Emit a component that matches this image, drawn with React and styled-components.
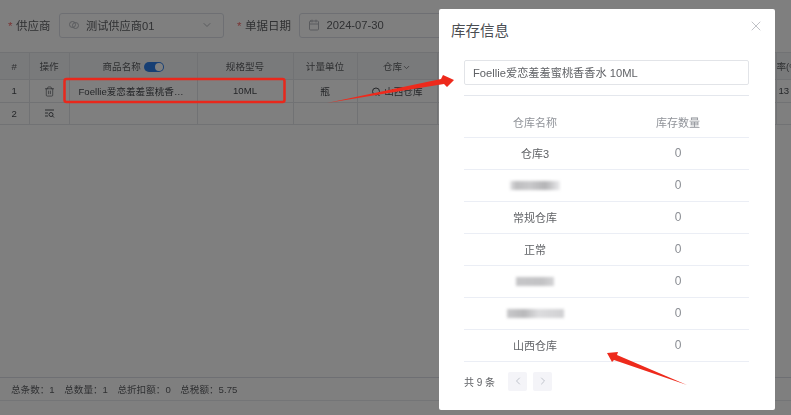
import React from 'react'
import styled, { createGlobalStyle } from 'styled-components'
import { ChevronDown, ChevronLeft, ChevronRight, Calendar, Trash2, X } from 'lucide-react'

const Global = createGlobalStyle`
  html, body {
    margin: 0;
    padding: 0;
    width: 791px;
    height: 415px;
    overflow: hidden;
    background: #fff;
    font-family: "Liberation Sans", "Noto Sans CJK SC", sans-serif;
    color: #606266;
  }
`

const Page = styled.div`
  width: 791px;
  height: 415px;
  display: flex;
  flex-direction: column;
  background: #fff;
  filter: blur(0.35px);
`

const FormRow = styled.div`
  display: flex;
  align-items: center;
  height: 52px;
  padding: 0 0 2px 8px;
  box-sizing: border-box;
  font-size: 11.5px;
`

const Label = styled.label`
  color: #606266;
  margin-right: 8.5px;
  white-space: nowrap;
  & > i {
    color: #f56c6c;
    font-style: normal;
    margin-right: 3.5px;
  }
`

const Field = styled.div`
  display: flex;
  align-items: center;
  width: ${p => p.$width}px;
  height: 25px;
  margin-right: 13px;
  padding: 0 10px 0 8px;
  box-sizing: border-box;
  border: 1px solid #dcdfe6;
  border-radius: 3px;
  gap: 6px;
  color: #606266;
  font-size: 11.2px;
  & > span { flex: 1; }
  & > svg { color: #b4b7bd; flex: none; }
`

const Grid = styled.table`
  border-collapse: collapse;
  table-layout: fixed;
  width: 791px;
  font-size: 9.6px;
  & th, & td {
    border: 1px solid #e2e4e8;
    text-align: center;
    padding: 0;
    overflow: hidden;
    white-space: nowrap;
  }
  & th {
    height: 26px;
    background: #f3f4f6;
    color: #606266;
    font-weight: 400;
  }
  & td { height: 21.5px; color: #4a4d52; }
  & tr > :first-child { border-left: 0; }
  & tr > :last-child { border-right: 0; }
  & svg { vertical-align: middle; }
`

const NameCell = styled.td`
  && { text-align: left; padding-left: 9px; }
`

const LastHead = styled.th`
  && { text-align: left; }
`

const Toggle = styled.span`
  display: inline-block;
  position: relative;
  vertical-align: -2px;
  width: 20px;
  height: 10px;
  border-radius: 5px;
  background: #2f7fe8;
  &::after {
    content: '';
    position: absolute;
    right: 1px;
    top: 1px;
    width: 8px;
    height: 8px;
    border-radius: 50%;
    background: #fff;
  }
`

const Spacer = styled.div`
  flex: 1;
`

const Footer = styled.div`
  height: 22px;
  margin-bottom: 14px;
  padding-left: 11px;
  border-top: 1px solid #dcdfe6;
  border-bottom: 1px solid #e8eaee;
  display: flex;
  align-items: center;
  gap: 9.5px;
  font-size: 9.6px;
  color: #606266;
`

const Mask = styled.div`
  position: fixed;
  inset: 0;
  background: rgba(0, 0, 0, 0.5);
  display: flex;
  justify-content: flex-end;
  align-items: flex-start;
  padding: 9px 16px 0 0;
`

const Modal = styled.div`
  width: 336px;
  height: 401px;
  background: #fff;
  border-radius: 2px;
  display: flex;
  flex-direction: column;
  filter: blur(0.3px);
`

const ModalHead = styled.div`
  height: 51px;
  display: flex;
  align-items: center;
  justify-content: space-between;
  padding: 0 11px 10px 12px;
  box-sizing: border-box;
  font-size: 14.5px;
  color: #4a4d52;
  & > svg { color: #a8abb2; margin-top: -8px; }
`

const ModalBody = styled.div`
  padding: 0 26px 0 25px;
  display: flex;
  flex-direction: column;
`

const NameBox = styled.div`
  height: 23px;
  line-height: 25px;
  padding-left: 8px;
  border: 1px solid #e2e4e8;
  border-radius: 2px;
  font-size: 11.2px;
  color: #606266;
`

const Divider = styled.div`
  height: 1px;
  margin-top: 10px;
  background: #e4e7ed;
`

const StockRow = styled.div`
  display: grid;
  grid-template-columns: 142px 1fr;
  align-items: center;
  box-sizing: content-box;
  height: ${p => (p.$head ? 31 : 30)}px;
  padding-top: ${p => (p.$head ? 10 : 0)}px;
  padding-bottom: ${p => (p.$head ? 0 : 1)}px;
  border-bottom: 1px solid #ebeef5;
  font-size: 11px;
  color: ${p => (p.$head ? '#909399' : '#606266')};
  text-align: center;
`

const Qty = styled.span`
  padding-left: 1px;
  font-size: ${p => (p.$head ? 11 : 12)}px;
  color: ${p => (p.$head ? '#909399' : '#8a8d93')};
`

const Smudge = styled.div`
  justify-self: center;
  width: ${p => p.$width}px;
  height: 9px;
  background: linear-gradient(90deg, ${p => p.$stops});
  filter: blur(1.5px);
`

const Pager = styled.div`
  display: flex;
  align-items: center;
  height: 38px;
  font-size: 10px;
  color: #606266;
`

const PageCount = styled.span`
  margin-right: 13px;
`

const PageButton = styled.div`
  display: flex;
  align-items: center;
  justify-content: center;
  width: 19px;
  height: 19px;
  margin-right: 6px;
  border-radius: 2px;
  background: #f4f4f8;
  color: #c0c4cc;
`

const Notes = styled.svg`
  position: fixed;
  left: 0;
  top: 0;
  pointer-events: none;
  filter: blur(0.4px);
`

const LinkIcon = () => (
  <svg width="12" height="12" viewBox="0 0 12 12" fill="none" stroke="#b4b7bd" strokeWidth="1">
    <circle cx="4.5" cy="5.5" r="3" />
    <circle cx="7.5" cy="6.5" r="3" />
  </svg>
)

const ListSearch = () => (
  <svg width="11" height="11" viewBox="0 0 11 11" fill="none" stroke="#55585d" strokeWidth="1">
    <path d="M1 2h9M1 5h3M1 8h3" />
    <circle cx="7" cy="6.5" r="2" />
    <path d="M8.5 8l1.5 1.5" />
  </svg>
)

const SearchDot = () => (
  <svg width="10" height="10" viewBox="0 0 10 10" fill="none" stroke="#4a4d52" strokeWidth="1">
    <circle cx="5" cy="4.5" r="3.5" />
    <path d="M7 7.5l1.5 1.5" />
  </svg>
)

const stock = ['仓库3', null, '常规仓库', '正常', null, null, '山西仓库']
const smudges = {
  1: [50, '#e4e4e6, #bdbdbf 12%, #c8c8ca 40%, #b4b4b6 70%, #c0c0c2 78%, #ececee'],
  4: [38, '#c6c6c8, #c2c2c4 70%, #d4d4d6'],
  5: [57, '#c8c8ca, #b8b8ba 30%, #dcdcde 55%, #d0d0d2']
}

const App = () => (
  <>
    <Global />
    <Page>
      <FormRow>
        <Label><i>*</i>供应商</Label>
        <Field $width={165}>
          <LinkIcon />
          <span>测试供应商01</span>
          <ChevronDown size={12} />
        </Field>
        <Label><i>*</i>单据日期</Label>
        <Field $width={170}>
          <Calendar size={12} />
          <span>2024-07-30</span>
        </Field>
      </FormRow>

      <Grid>
        <colgroup>
          <col width="29" />
          <col width="40" />
          <col width="128" />
          <col width="96" />
          <col width="64" />
          <col width="80" />
          <col width="339" />
          <col width="15" />
        </colgroup>
        <thead>
          <tr>
            <th>#</th>
            <th>操作</th>
            <th>商品名称 <Toggle /></th>
            <th>规格型号</th>
            <th>计量单位</th>
            <th>仓库<ChevronDown size={9} /></th>
            <th></th>
            <LastHead>率(%</LastHead>
          </tr>
        </thead>
        <tbody>
          <tr>
            <td>1</td>
            <td><Trash2 size={11} strokeWidth={1.4} /></td>
            <NameCell>Foellie爱恋羞羞蜜桃香…</NameCell>
            <td>10ML</td>
            <td>瓶</td>
            <td><SearchDot /> 山西仓库</td>
            <td></td>
            <td>13</td>
          </tr>
          <tr>
            <td>2</td>
            <td><ListSearch /></td>
            <td></td>
            <td></td>
            <td></td>
            <td></td>
            <td></td>
            <td></td>
          </tr>
        </tbody>
      </Grid>

      <Spacer />

      <Footer>
        <span>总条数：1</span>
        <span>总数量：1</span>
        <span>总折扣额：0</span>
        <span>总税额：5.75</span>
      </Footer>
    </Page>

    <Mask>
      <Modal>
        <ModalHead>
          <span>库存信息</span>
          <X size={16} strokeWidth={1.1} />
        </ModalHead>
        <ModalBody>
          <NameBox>Foellie爱恋羞羞蜜桃香香水 10ML</NameBox>
          <Divider />
          <StockRow $head>
            <span>仓库名称</span>
            <Qty $head>库存数量</Qty>
          </StockRow>
          {stock.map((name, i) => (
            <StockRow key={i}>
              {name ? <span>{name}</span> : <Smudge $width={smudges[i][0]} $stops={smudges[i][1]} />}
              <Qty>0</Qty>
            </StockRow>
          ))}
          <Pager>
            <PageCount>共 9 条</PageCount>
            <PageButton><ChevronLeft size={12} /></PageButton>
            <PageButton><ChevronRight size={12} /></PageButton>
          </Pager>
        </ModalBody>
      </Modal>
    </Mask>

    <Notes width="791" height="415" viewBox="0 0 791 415">
      <rect x="64.5" y="79" width="220" height="23" rx="2" fill="none" stroke="#e8281c" strokeWidth="2.5" />
      <polygon points="327,103 441,79 443,75 454,80 447,87 444,84" fill="#ee2a1c" />
      <polygon points="607,353 618,352 617,355 687,385 614,360 612,362" fill="#ee2a1c" />
    </Notes>
  </>
)

export default App
